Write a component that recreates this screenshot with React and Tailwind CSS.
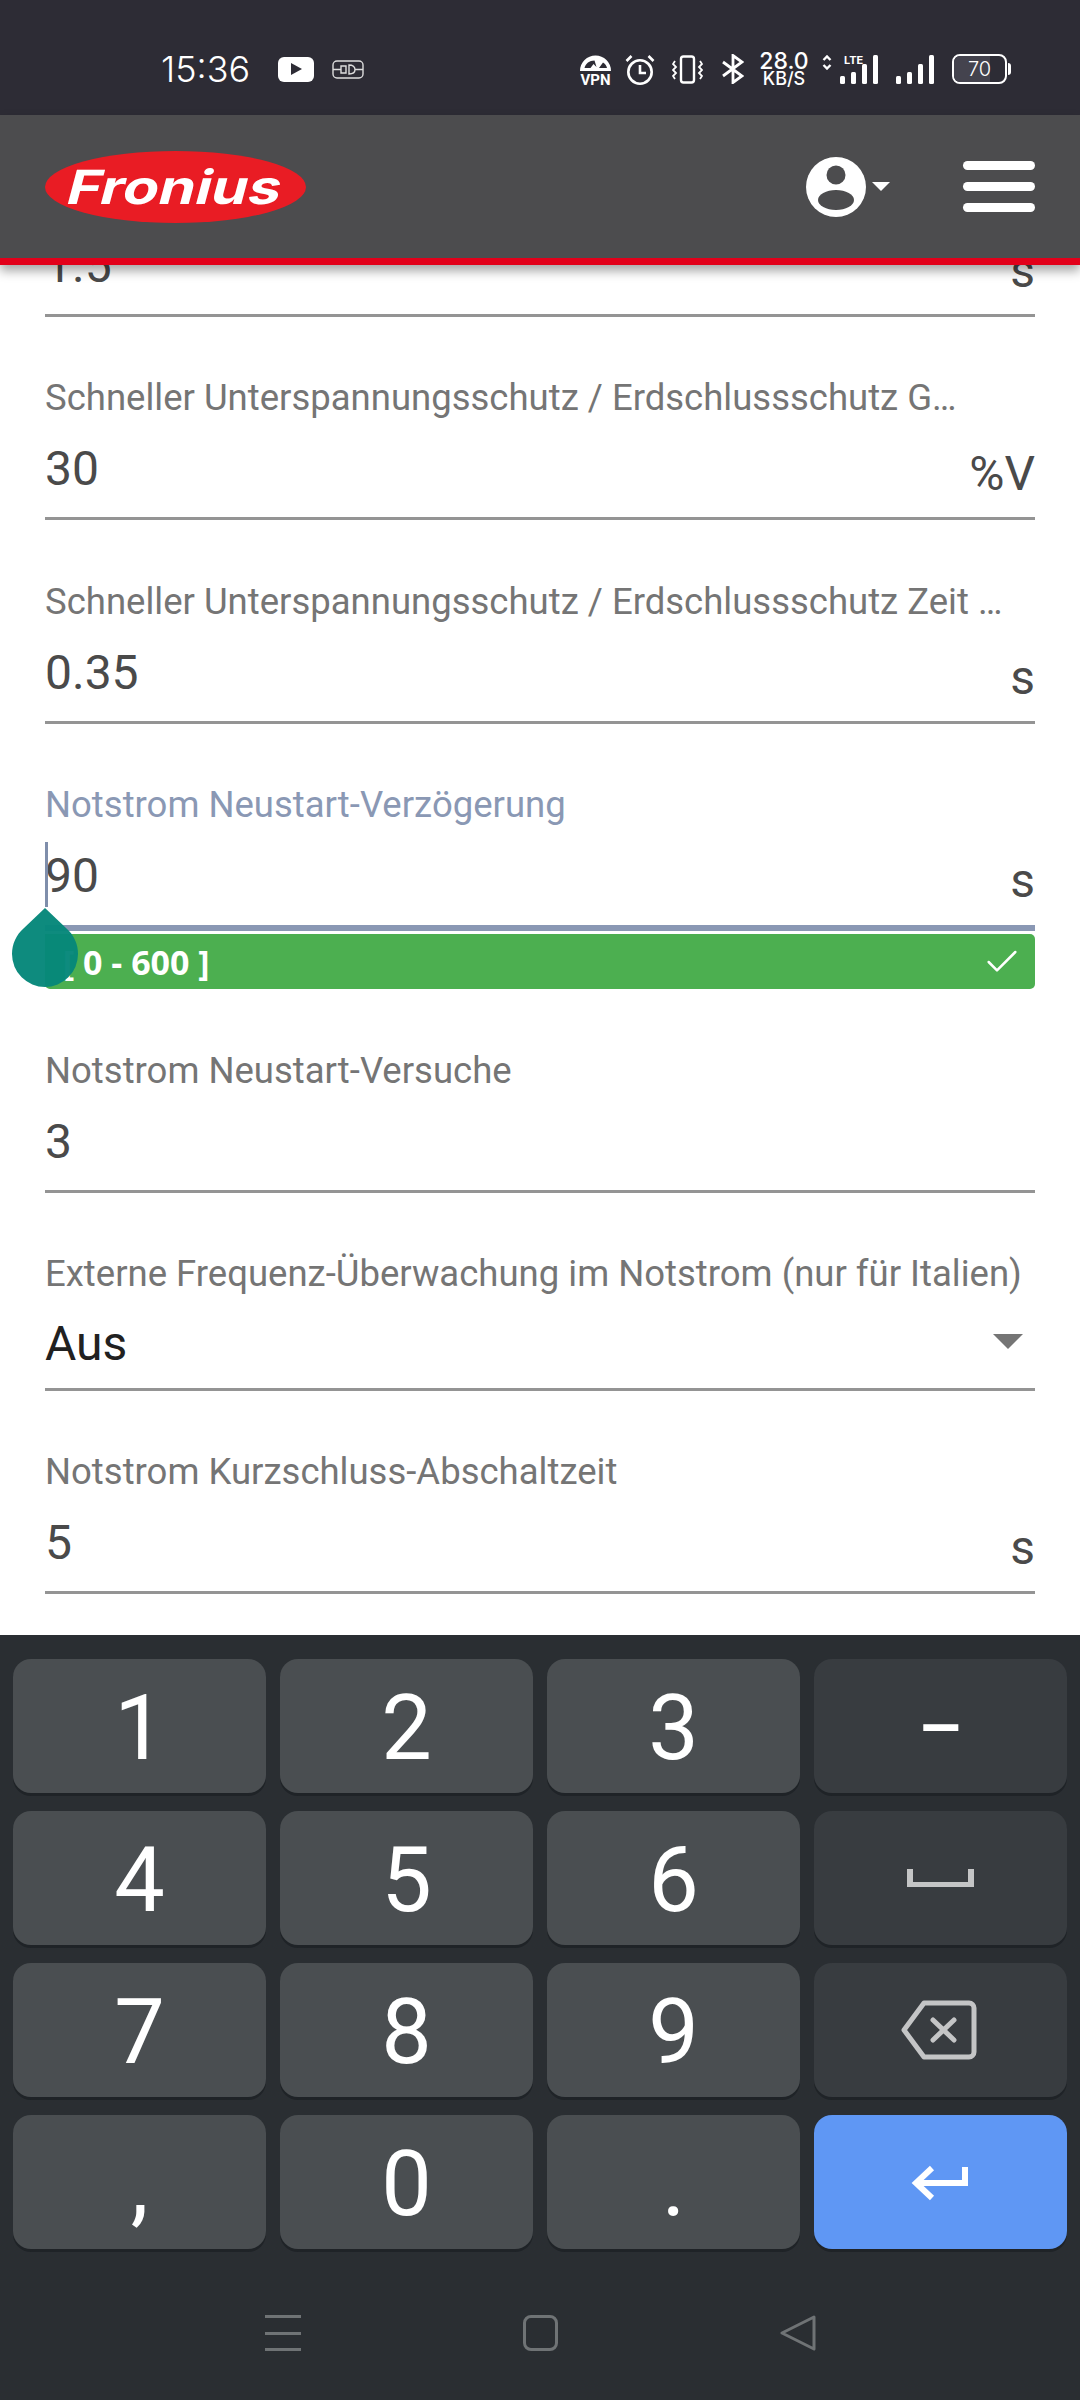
import { Check } from "lucide-react";

const Bars = ({ className }) => (
  <svg width="38" height="29" viewBox="0 0 38 29" fill="#fff" className={className}>
    <rect x="0" y="21" width="5" height="8" rx="1.5" />
    <rect x="11" y="17" width="5" height="12" rx="1.5" />
    <rect x="22" y="9" width="5" height="20" rx="1.5" />
    <rect x="33" y="0" width="5" height="29" rx="1.5" />
  </svg>
);

function StatusIcons() {
  return (
    <div className="flex items-center">
      <svg width="31" height="31" viewBox="0 0 31 31" className="mr-[14px]" fill="#fff">
        <path fillRule="evenodd" d="M0 17a15.500 15.500 0 0 1 31 0zM4.500 14h6l3-4 3 3-2-6.500c-5 0-9 3-10 7.500zM19 14h8c-.5-2.500-2-4.500-4-5.500z" />
        <text x="15.500" y="30.500" textAnchor="middle" fontSize="15" fontWeight="700" fontFamily="Roboto" textLength="30" lengthAdjust="spacingAndGlyphs">VPN</text>
      </svg>
      <svg width="30" height="31" viewBox="0 0 30 31" fill="none" stroke="#fff" strokeWidth="2.600" className="mr-[17px]">
        <circle cx="15" cy="18" r="11.700" />
        <path d="M15 11v8h6M1.500 7l5-5M28.500 7l-5-5" />
      </svg>
      <svg width="31" height="29" viewBox="0 0 31 29" fill="none" stroke="#fff" strokeWidth="1.800" className="mr-[19px]">
        <rect x="9" y="1.500" width="13" height="26" rx="2.500" strokeWidth="2.400" />
        <path d="M3 6L1 9l3 3-3 3 3 3-3 3 2 3M28 6l2 3-3 3 3 3-3 3 3 3-2 3" />
      </svg>
      <svg width="22" height="30" viewBox="0 0 22 30" fill="none" stroke="#fff" strokeWidth="2.800" className="mr-[15px]">
        <path d="M1 8l19 14-9 6.500V1.500L20 8 1 22" />
      </svg>
      <div className="mr-[13px] flex w-[50px] flex-col items-center font-['Inter',sans-serif] font-medium leading-none text-white">
        <span className="text-[23px] leading-[20px]">28.0</span>
        <span className="text-[18px] leading-[16px]">KB/S</span>
      </div>
      <div className="relative mr-[18px] h-[31px] w-[56px]">
        <svg width="10" height="15" viewBox="0 0 10 15" fill="none" stroke="#fff" strokeWidth="2.400" className="absolute left-0 top-[1px]">
          <path d="M1.500 5L5 1.500 8.500 5M1.500 10L5 13.500 8.500 10" />
        </svg>
        <Bars className="absolute left-[18px] top-[1px]" />
        <span className="absolute left-[22px] top-[-1px] font-['Inter',sans-serif] text-[11px] leading-[14px] font-bold text-white">LTE</span>
      </div>
      <Bars className="mr-[18px]" />
      <div className="relative flex h-[30px] w-[55px] items-center justify-center overflow-hidden rounded-[8px] border-[2.500px] border-white">
        <div className="absolute inset-y-0 left-0 w-[70%] bg-[#44434e]" />
        <span className="relative font-['Inter',sans-serif] text-[20px] font-light text-white">70</span>
      </div>
      <div className="ml-[1px] h-[12px] w-[3px] rounded-r-sm bg-white" />
    </div>
  );
}

function Logo() {
  return (
    <div className="flex h-[72px] w-[261px] items-center justify-center overflow-hidden rounded-[50%] bg-[#e91c24]">
      <span className="-skew-x-12 scale-x-[1.25] font-['Inter',sans-serif] text-[47px] font-bold leading-none text-white">Fronius</span>
    </div>
  );
}

function Field({ label, value, unit, className = "" }) {
  return (
    <div className={className}>
      <div className="h-[38px] whitespace-nowrap text-[36.5px] leading-[38px] text-[#757575]">{label}</div>
      <div className="mt-[29px] flex h-[71px] items-start justify-between text-[48px] leading-[46px] text-[#4a4a4a]">
        <span>{value}</span>
        {unit && <span className="translate-y-[5px]">{unit}</span>}
      </div>
      <div className="h-[3px] bg-[#949494]" />
    </div>
  );
}

function FocusedField() {
  return (
    <div className="relative mt-[62px]">
      <div className="h-[38px] whitespace-nowrap text-[36.5px] leading-[38px] text-[#8a98b4]">Notstrom Neustart-Verzögerung</div>
      <div className="mt-[29px] flex h-[72px] items-start justify-between text-[48px] leading-[46px] text-[#4a4a4a]">
        <span>90</span>
        <span className="translate-y-[5px]">s</span>
      </div>
      <div className="h-[6px] bg-[#8a98b4]" />
      <div className="mt-[3px] flex h-[55px] items-center justify-between rounded-[5px] rounded-tl-none bg-[#4caf50] pl-[18px] pr-[13px] font-['Open_Sans',sans-serif] text-[34px] font-bold leading-none text-white">
        <span>[ 0 - 600 ]</span>
        <Check size={40} strokeWidth={1.500} />
      </div>
      <div className="absolute left-0 top-[56px] h-[65px] w-[3px] bg-[#7f8eab]" />
      <svg width="66" height="80" viewBox="0 0 66 80" className="absolute left-[-33px] top-[122px]">
        <path d="M33 0L12 20C4 27 0 36 0 46A33 33 0 0 0 66 46C66 36 62 27 54 20Z" fill="#06877a" fillOpacity="0.97" />
      </svg>
    </div>
  );
}

function SelectField() {
  return (
    <div className="mt-[62px]">
      <div className="h-[38px] whitespace-nowrap text-[36.5px] leading-[38px] text-[#757575]">Externe Frequenz-Überwachung im Notstrom (nur für Italien)</div>
      <div className="mt-[28px] flex h-[67px] items-start justify-between text-[48px] leading-[46px] text-[#212121]">
        <span>Aus</span>
        <div className="mr-[12px] mt-[13px] h-0 w-0 border-x-[15px] border-t-[15px] border-x-transparent border-t-[#757575]" />
      </div>
      <div className="h-[3px] bg-[#949494]" />
    </div>
  );
}

const Key = ({ children, fn, accent }) => (
  <div className={`flex h-[134px] items-center justify-center rounded-[18px] text-white shadow-[0_3px_0_#1f2327] ${accent ? "bg-[#5f97f4]" : fn ? "bg-[#383c40]" : "bg-[#4a4e51]"}`}>
    {children}
  </div>
);

const Digit = ({ c }) => <span className="pt-[5px] text-[90px] leading-none">{c}</span>;

export default function App() {
  return (
    <div className="flex h-[2400px] w-[1080px] flex-col overflow-hidden bg-white font-['Roboto',sans-serif]">
      <div className="flex h-[115px] shrink-0 items-center justify-between bg-[#2d2c35] pl-[161px] pr-[69px] pt-[23px] text-white">
        <div className="flex items-center">
          <span className="mr-[28px] font-['Inter',sans-serif] text-[36px] font-light leading-none">15:36</span>
          <div className="mr-[18px] flex h-[25px] w-[36px] items-center justify-center rounded-[6px] bg-white">
            <svg width="11" height="12" viewBox="0 0 11 12"><path d="M0 0l11 6-11 6z" fill="#2d2c35" /></svg>
          </div>
          <svg width="32" height="19" viewBox="0 0 32 19" fill="none" stroke="#ddd" strokeWidth="1.400">
            <rect x="1" y="1" width="30" height="17" rx="4" />
            <path d="M1 9.500h8M23 9.500h8M9 6h5v7H9zM17 5v9c4 0 6-2 6-4.500S21 5 17 5z" />
          </svg>
        </div>
        <StatusIcons />
      </div>

      <div className="relative z-10 flex h-[150px] shrink-0 items-center justify-between border-b-[7px] border-[#e2001a] bg-[#4c4c4e] pl-[45px] pr-[45px] shadow-[0_6px_10px_rgba(0,0,0,0.35)]">
        <Logo />
        <div className="flex items-center">
          <svg width="60" height="60" viewBox="0 0 60 60" className="mr-[6px]">
            <circle cx="30" cy="30" r="30" fill="#fff" />
            <circle cx="30" cy="18" r="9.500" fill="#4c4c4e" />
            <ellipse cx="30" cy="43" rx="18" ry="10" fill="#4c4c4e" />
          </svg>
          <div className="mr-[73px] h-0 w-0 border-x-[9px] border-t-[9px] border-x-transparent border-t-white" />
          <div className="flex w-[72px] flex-col gap-[12px]">
            <div className="h-[9px] rounded-full bg-white" />
            <div className="h-[9px] rounded-full bg-white" />
            <div className="h-[9px] rounded-full bg-white" />
          </div>
        </div>
      </div>

      <div className="h-[1370px] shrink-0 overflow-hidden px-[45px]">
        <div className="mt-[-22px]">
          <div className="flex h-[71px] items-start justify-between text-[48px] leading-[46px] text-[#4a4a4a]">
            <span>1.5</span>
            <span className="translate-y-[5px]">s</span>
          </div>
          <div className="h-[3px] bg-[#949494]" />
        </div>
        <Field className="mt-[62px]" label="Schneller Unterspannungsschutz / Erdschlussschutz G…" value="30" unit="%V" />
        <Field className="mt-[63px]" label="Schneller Unterspannungsschutz / Erdschlussschutz Zeit …" value="0.35" unit="s" />
        <FocusedField />
        <Field className="mt-[63px]" label="Notstrom Neustart-Versuche" value="3" />
        <SelectField />
        <Field className="mt-[62px]" label="Notstrom Kurzschluss-Abschaltzeit" value="5" unit="s" />
      </div>

      <div className="flex-1 bg-[#2a2e32]">
        <div className="grid grid-cols-4 gap-x-[14px] gap-y-[18px] px-[13px] pt-[24px]">
          <Key><Digit c="1" /></Key>
          <Key><Digit c="2" /></Key>
          <Key><Digit c="3" /></Key>
          <Key fn><span className="pt-[5px] text-[70px] font-medium leading-none">–</span></Key>
          <Key><Digit c="4" /></Key>
          <Key><Digit c="5" /></Key>
          <Key><Digit c="6" /></Key>
          <Key fn>
            <svg width="67" height="18" viewBox="0 0 67 18" fill="#c4c5c6">
              <path d="M0 0h6v13h55V0h6v18H0z" />
            </svg>
          </Key>
          <Key><Digit c="7" /></Key>
          <Key><Digit c="8" /></Key>
          <Key><Digit c="9" /></Key>
          <Key fn>
            <svg width="76" height="60" viewBox="0 0 76 60" fill="none" stroke="#c4c5c6" strokeWidth="5" strokeLinejoin="round" strokeLinecap="round" className="mr-[3px]">
              <path d="M23 3H68a5 5 0 0 1 5 5V52a5 5 0 0 1-5 5H23L3 30z" />
              <path d="M32 20l21 20M53 20L32 40" />
            </svg>
          </Key>
          <Key><Digit c="," /></Key>
          <Key><Digit c="0" /></Key>
          <Key><Digit c="." /></Key>
          <Key accent>
            <svg width="57" height="36" viewBox="0 0 57 36" fill="none" stroke="#fff" strokeWidth="6" className="mr-[3px] mt-[2px]">
              <path d="M54 2V18H5M21 3L5 18l16 15" />
            </svg>
          </Key>
        </div>
        <div className="flex items-center justify-center gap-[222px] pt-[66px]">
          <div className="flex h-[36px] w-[36px] flex-col justify-between">
            <div className="h-[3px] bg-[#6f7375]" />
            <div className="h-[3px] bg-[#6f7375]" />
            <div className="h-[3px] bg-[#6f7375]" />
          </div>
          <div className="h-[36px] w-[35px] rounded-[8px] border-[3px] border-[#6f7375]" />
          <svg width="36" height="36" viewBox="0 0 36 36" fill="none" stroke="#6f7375" strokeWidth="3" strokeLinejoin="round">
            <path d="M34 2L2 18l32 16z" />
          </svg>
        </div>
      </div>
    </div>
  );
}
